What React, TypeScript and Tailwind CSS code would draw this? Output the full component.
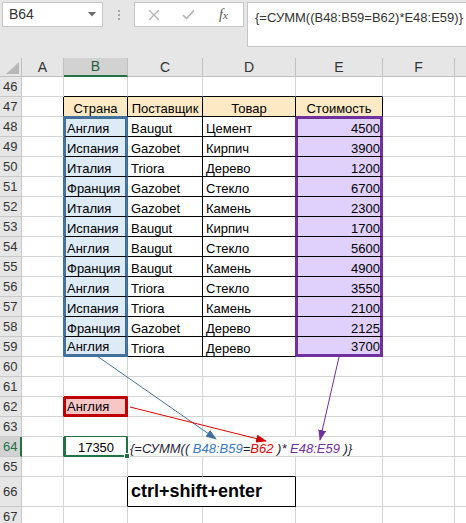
import React from "react";

const data: [string, string, string, number][] = [
  ["Англия", "Baugut", "Цемент", 4500],
  ["Испания", "Gazobet", "Кирпич", 3900],
  ["Италия", "Triora", "Дерево", 1200],
  ["Франция", "Gazobet", "Стекло", 6700],
  ["Италия", "Gazobet", "Камень", 2300],
  ["Испания", "Baugut", "Кирпич", 1700],
  ["Англия", "Baugut", "Стекло", 5600],
  ["Франция", "Baugut", "Камень", 4900],
  ["Англия", "Triora", "Стекло", 3550],
  ["Испания", "Triora", "Камень", 2100],
  ["Франция", "Gazobet", "Дерево", 2125],
  ["Англия", "Triora", "Дерево", 3700],
];

function RH({ n, sel }: { n: number; sel?: boolean }) {
  if (sel)
    return (
      <div className="w-[22px] shrink-0 h-full bg-[#d2d2d2] text-[#217346] border-b border-b-[#c8c8c8] border-r-2 border-r-[#217346] flex items-center pl-[3px] text-[13px]">
        {n}
      </div>
    );
  return (
    <div className="w-[22px] shrink-0 h-full bg-[#e6e6e6] text-[#333] border-b border-r border-[#c8c8c8] flex items-center pl-[3px] text-[13px]">
      {n}
    </div>
  );
}

function Cell({ c, children }: { c: string; children?: React.ReactNode }) {
  return (
    <div className={"shrink-0 h-full flex items-end overflow-hidden whitespace-nowrap leading-[15px] " + c}>
      {children}
    </div>
  );
}

const gA = "w-[42px] border-r border-b border-[#d4d4d4]";
const gB = "w-[64px] border-r border-b border-[#d4d4d4]";
const gC = "w-[75px] border-r border-b border-[#d4d4d4]";
const gD = "w-[93px] border-r border-b border-[#d4d4d4]";
const gE = "w-[87px] border-r border-b border-[#d4d4d4]";
const gF = "w-[72px] border-r border-b border-[#d4d4d4]";
const gG = "flex-1 border-b border-[#d4d4d4]";

function Blank({ n }: { n: number }) {
  return (
    <div className="flex h-[20px]">
      <RH n={n} />
      <Cell c={gA} />
      <Cell c={gB} />
      <Cell c={gC} />
      <Cell c={gD} />
      <Cell c={gE} />
      <Cell c={gF} />
      <Cell c={gG} />
    </div>
  );
}

export default function App() {
  return (
    <div className="relative w-[466px] h-[523px] overflow-hidden bg-white font-['Liberation_Sans',Arial,sans-serif] text-[13px] text-black">
      {/* formula bar area */}
      <div className="h-[58px] bg-[#e6e6e6] flex items-start pt-[2px] pl-[2px]">
        <div className="w-[101px] h-[25px] shrink-0 bg-white border border-[#c6c6c6] flex items-center justify-between pl-[6px] pr-[6px] text-[14px] text-[#333]">
          <span>B64</span>
          <svg width="8" height="5" viewBox="0 0 8 5">
            <path d="M0 0 L8 0 L4 4.5 Z" fill="#6b6b6b" />
          </svg>
        </div>
        <div className="w-[31px] h-[25px] shrink-0 flex flex-col items-center justify-center gap-[2px]">
          <div className="w-[2px] h-[2px] bg-[#a6a6a6]" />
          <div className="w-[2px] h-[2px] bg-[#a6a6a6]" />
          <div className="w-[2px] h-[2px] bg-[#a6a6a6]" />
        </div>
        <div className="w-[110px] h-[25px] shrink-0 bg-white border border-[#c6c6c6] flex items-center pl-[13px] gap-[22px]">
          <svg width="12" height="12" viewBox="0 0 12 12">
            <path d="M1 1 L11 11 M11 1 L1 11" stroke="#b3b3b3" strokeWidth="1.3" fill="none" />
          </svg>
          <svg width="13" height="11" viewBox="0 0 13 11">
            <path d="M1 6 L4.5 9.5 L12 1.5" stroke="#b3b3b3" strokeWidth="1.6" fill="none" />
          </svg>
          <span className="font-['Liberation_Serif',serif] italic text-[14px] text-[#555] ml-[2px]">
            f<span className="text-[11px]">x</span>
          </span>
        </div>
        <div className="ml-[3px] flex-1 h-[45px] bg-white border-t border-l border-b border-[#c6c6c6] pl-[7px] pt-[5px] text-[13px] text-[#333] whitespace-nowrap">
          {"{=СУММ((B48:B59=B62)*E48:E59)}"}
        </div>
      </div>

      {/* column headers */}
      <div className="flex h-[19px] bg-[#e6e6e6] text-[14px] text-[#333]">
        <div className="w-[22px] shrink-0 border-r border-b border-[#c0c0c0] flex items-end justify-end pr-[2px] pb-[2px]">
          <svg width="13" height="12" viewBox="0 0 13 12">
            <polygon points="13,0 13,12 0,12" fill="#b8b8b8" />
          </svg>
        </div>
        <div className="w-[42px] shrink-0 border-r border-b border-[#c0c0c0] flex items-center justify-center">A</div>
        <div className="w-[64px] shrink-0 bg-[#d2d2d2] text-[#1f5e3a] border-r border-r-[#c0c0c0] border-b-2 border-b-[#217346] flex items-center justify-center">B</div>
        <div className="w-[75px] shrink-0 border-r border-b border-[#c0c0c0] flex items-center justify-center">C</div>
        <div className="w-[93px] shrink-0 border-r border-b border-[#c0c0c0] flex items-center justify-center">D</div>
        <div className="w-[87px] shrink-0 border-r border-b border-[#c0c0c0] flex items-center justify-center">E</div>
        <div className="w-[72px] shrink-0 border-r border-b border-[#c0c0c0] flex items-center justify-center">F</div>
        <div className="flex-1 border-b border-[#c0c0c0]" />
      </div>

      {/* row 46 */}
      <div className="flex h-[20px]">
        <RH n={46} />
        <Cell c={gA} />
        <Cell c="w-[64px] border-r border-r-[#d4d4d4] border-b border-b-black" />
        <Cell c="w-[75px] border-r border-r-[#d4d4d4] border-b border-b-black" />
        <Cell c="w-[93px] border-r border-r-[#d4d4d4] border-b border-b-black" />
        <Cell c="w-[87px] border-r border-r-[#d4d4d4] border-b border-b-black" />
        <Cell c={gF} />
        <Cell c={gG} />
      </div>

      {/* row 47 header */}
      <div className="flex h-[20px]">
        <RH n={47} />
        <Cell c="w-[42px] border-r border-r-black border-b border-b-[#d4d4d4]" />
        <Cell c="w-[64px] bg-[#fde9c4] border-r border-r-black border-b border-b-[#41719c] justify-center">Страна</Cell>
        <Cell c="w-[75px] bg-[#fde9c4] border-r border-b border-black justify-center">Поставщик</Cell>
        <Cell c="w-[93px] bg-[#fde9c4] border-r border-b border-black justify-center">Товар</Cell>
        <Cell c="w-[87px] bg-[#fde9c4] border-r border-r-black border-b border-b-[#7030a0] justify-center">Стоимость</Cell>
        <Cell c={gF} />
        <Cell c={gG} />
      </div>

      {/* data rows 48-59 */}
      {data.map((r, i) => {
        const first = i === 0;
        const last = i === data.length - 1;
        return (
          <div key={i} className="flex h-[20px]">
            <RH n={48 + i} />
            <Cell c="w-[42px] border-r border-r-[#41719c] border-b border-b-[#d4d4d4]" />
            <Cell
              c={
                "w-[64px] bg-[#ddebf7] border-l-2 border-l-[#41719c] border-r-[3px] border-r-[#41719c] pl-[1px] " +
                (first ? "border-t-2 border-t-[#41719c] " : "") +
                (last ? "border-b-[3px] border-b-[#41719c]" : "border-b border-b-black")
              }
            >
              {r[0]}
            </Cell>
            <Cell c="w-[75px] border-r border-b border-black pl-[3px]">{r[1]}</Cell>
            <Cell c="w-[93px] border-r border-r-[#7030a0] border-b border-b-black pl-[3px]">{r[2]}</Cell>
            <Cell
              c={
                "w-[87px] bg-[#e0d0fc] border-l-2 border-l-[#7030a0] border-r-[3px] border-r-[#7030a0] justify-end " +
                (first ? "border-t-2 border-t-[#7030a0] " : "") +
                (last ? "border-b-[3px] border-b-[#7030a0]" : "border-b border-b-black")
              }
            >
              {r[3]}
            </Cell>
            <Cell c={gF} />
            <Cell c={gG} />
          </div>
        );
      })}

      <Blank n={60} />

      {/* row 61 */}
      <div className="flex h-[20px]">
        <RH n={61} />
        <Cell c={gA} />
        <Cell c="w-[64px] border-r border-r-[#d4d4d4] border-b border-b-[#c00000]" />
        <Cell c={gC} />
        <Cell c={gD} />
        <Cell c={gE} />
        <Cell c={gF} />
        <Cell c={gG} />
      </div>

      {/* row 62 */}
      <div className="flex h-[20px]">
        <RH n={62} />
        <Cell c="w-[42px] border-r border-r-[#c00000] border-b border-b-[#d4d4d4]" />
        <Cell c="w-[64px] bg-[#f9c6c6] border-l-2 border-l-[#c00000] border-t-2 border-t-[#c00000] border-r-[3px] border-r-[#c00000] border-b-[3px] border-b-[#c00000] pl-[1px]">
          Англия
        </Cell>
        <Cell c={gC} />
        <Cell c={gD} />
        <Cell c={gE} />
        <Cell c={gF} />
        <Cell c={gG} />
      </div>

      {/* row 63 */}
      <div className="flex h-[20px]">
        <RH n={63} />
        <Cell c={gA} />
        <Cell c="w-[64px] border-r border-r-[#d4d4d4] border-b border-b-[#217346]" />
        <Cell c={gC} />
        <Cell c={gD} />
        <Cell c={gE} />
        <Cell c={gF} />
        <Cell c={gG} />
      </div>

      {/* row 64 */}
      <div className="flex h-[20px]">
        <RH n={64} sel />
        <Cell c="w-[42px] border-r border-r-[#217346] border-b border-b-[#d4d4d4]" />
        <div className="relative w-[64px] shrink-0 h-full flex items-end justify-center leading-[15px] border-l-2 border-l-[#217346] border-r-2 border-r-[#217346] border-b-2 border-b-[#217346]">
          17350
          <div className="absolute z-10 -right-[4px] -bottom-[4px] w-[6px] h-[6px] bg-[#217346] border border-white" />
        </div>
        <div className="w-[255px] shrink-0 h-full flex items-end leading-[15px] whitespace-pre italic border-r border-b border-[#d4d4d4] pl-[2px] text-[13px]">
          <span>
            <span className="text-[#1f1f3a]">{"{=СУММ(( "}</span>
            <span className="text-[#3a78c2]">B48:B59</span>
            <span className="text-[#1f1f3a]">=</span>
            <span className="text-[#e00000]">B62</span>
            <span className="text-[#1f1f3a]">{" )* "}</span>
            <span className="text-[#7030a0]">E48:E59</span>
            <span className="text-[#1f1f3a]">{" )}"}</span>
          </span>
        </div>
        <Cell c={gF} />
        <Cell c={gG} />
      </div>

      {/* row 65 */}
      <div className="flex h-[20px]">
        <RH n={65} />
        <Cell c={gA} />
        <Cell c={gB} />
        <Cell c="w-[75px] border-r border-r-[#d4d4d4] border-b border-b-black" />
        <Cell c="w-[93px] border-r border-r-[#d4d4d4] border-b border-b-black" />
        <Cell c={gE} />
        <Cell c={gF} />
        <Cell c={gG} />
      </div>

      {/* row 66 */}
      <div className="flex h-[30px]">
        <RH n={66} />
        <Cell c={gA} />
        <Cell c="w-[64px] border-r border-r-black border-b border-b-[#d4d4d4]" />
        <div className="w-[168px] shrink-0 h-full flex items-center border-r border-b border-black pl-[3px] text-[18px] font-bold whitespace-nowrap">
          ctrl+shift+enter
        </div>
        <Cell c={gE} />
        <Cell c={gF} />
        <Cell c={gG} />
      </div>

      <Blank n={67} />

      {/* precedent arrows */}
      <svg className="absolute inset-0 pointer-events-none" width="466" height="523" viewBox="0 0 466 523">
        <defs>
          <marker id="mb" markerWidth="11" markerHeight="8" refX="10" refY="4" orient="auto" markerUnits="userSpaceOnUse">
            <path d="M0,0 L11,4 L0,8 Z" fill="#41719c" />
          </marker>
          <marker id="mr" markerWidth="11" markerHeight="8" refX="10" refY="4" orient="auto" markerUnits="userSpaceOnUse">
            <path d="M0,0 L11,4 L0,8 Z" fill="#d00000" />
          </marker>
          <marker id="mp" markerWidth="11" markerHeight="8" refX="10" refY="4" orient="auto" markerUnits="userSpaceOnUse">
            <path d="M0,0 L11,4 L0,8 Z" fill="#7030a0" />
          </marker>
        </defs>
        <line x1="97" y1="356" x2="216" y2="439" stroke="#41719c" strokeWidth="1" markerEnd="url(#mb)" />
        <line x1="130" y1="407" x2="266" y2="441" stroke="#e00000" strokeWidth="1" markerEnd="url(#mr)" />
        <line x1="339" y1="357" x2="320" y2="440" stroke="#7030a0" strokeWidth="1" markerEnd="url(#mp)" />
      </svg>
    </div>
  );
}
